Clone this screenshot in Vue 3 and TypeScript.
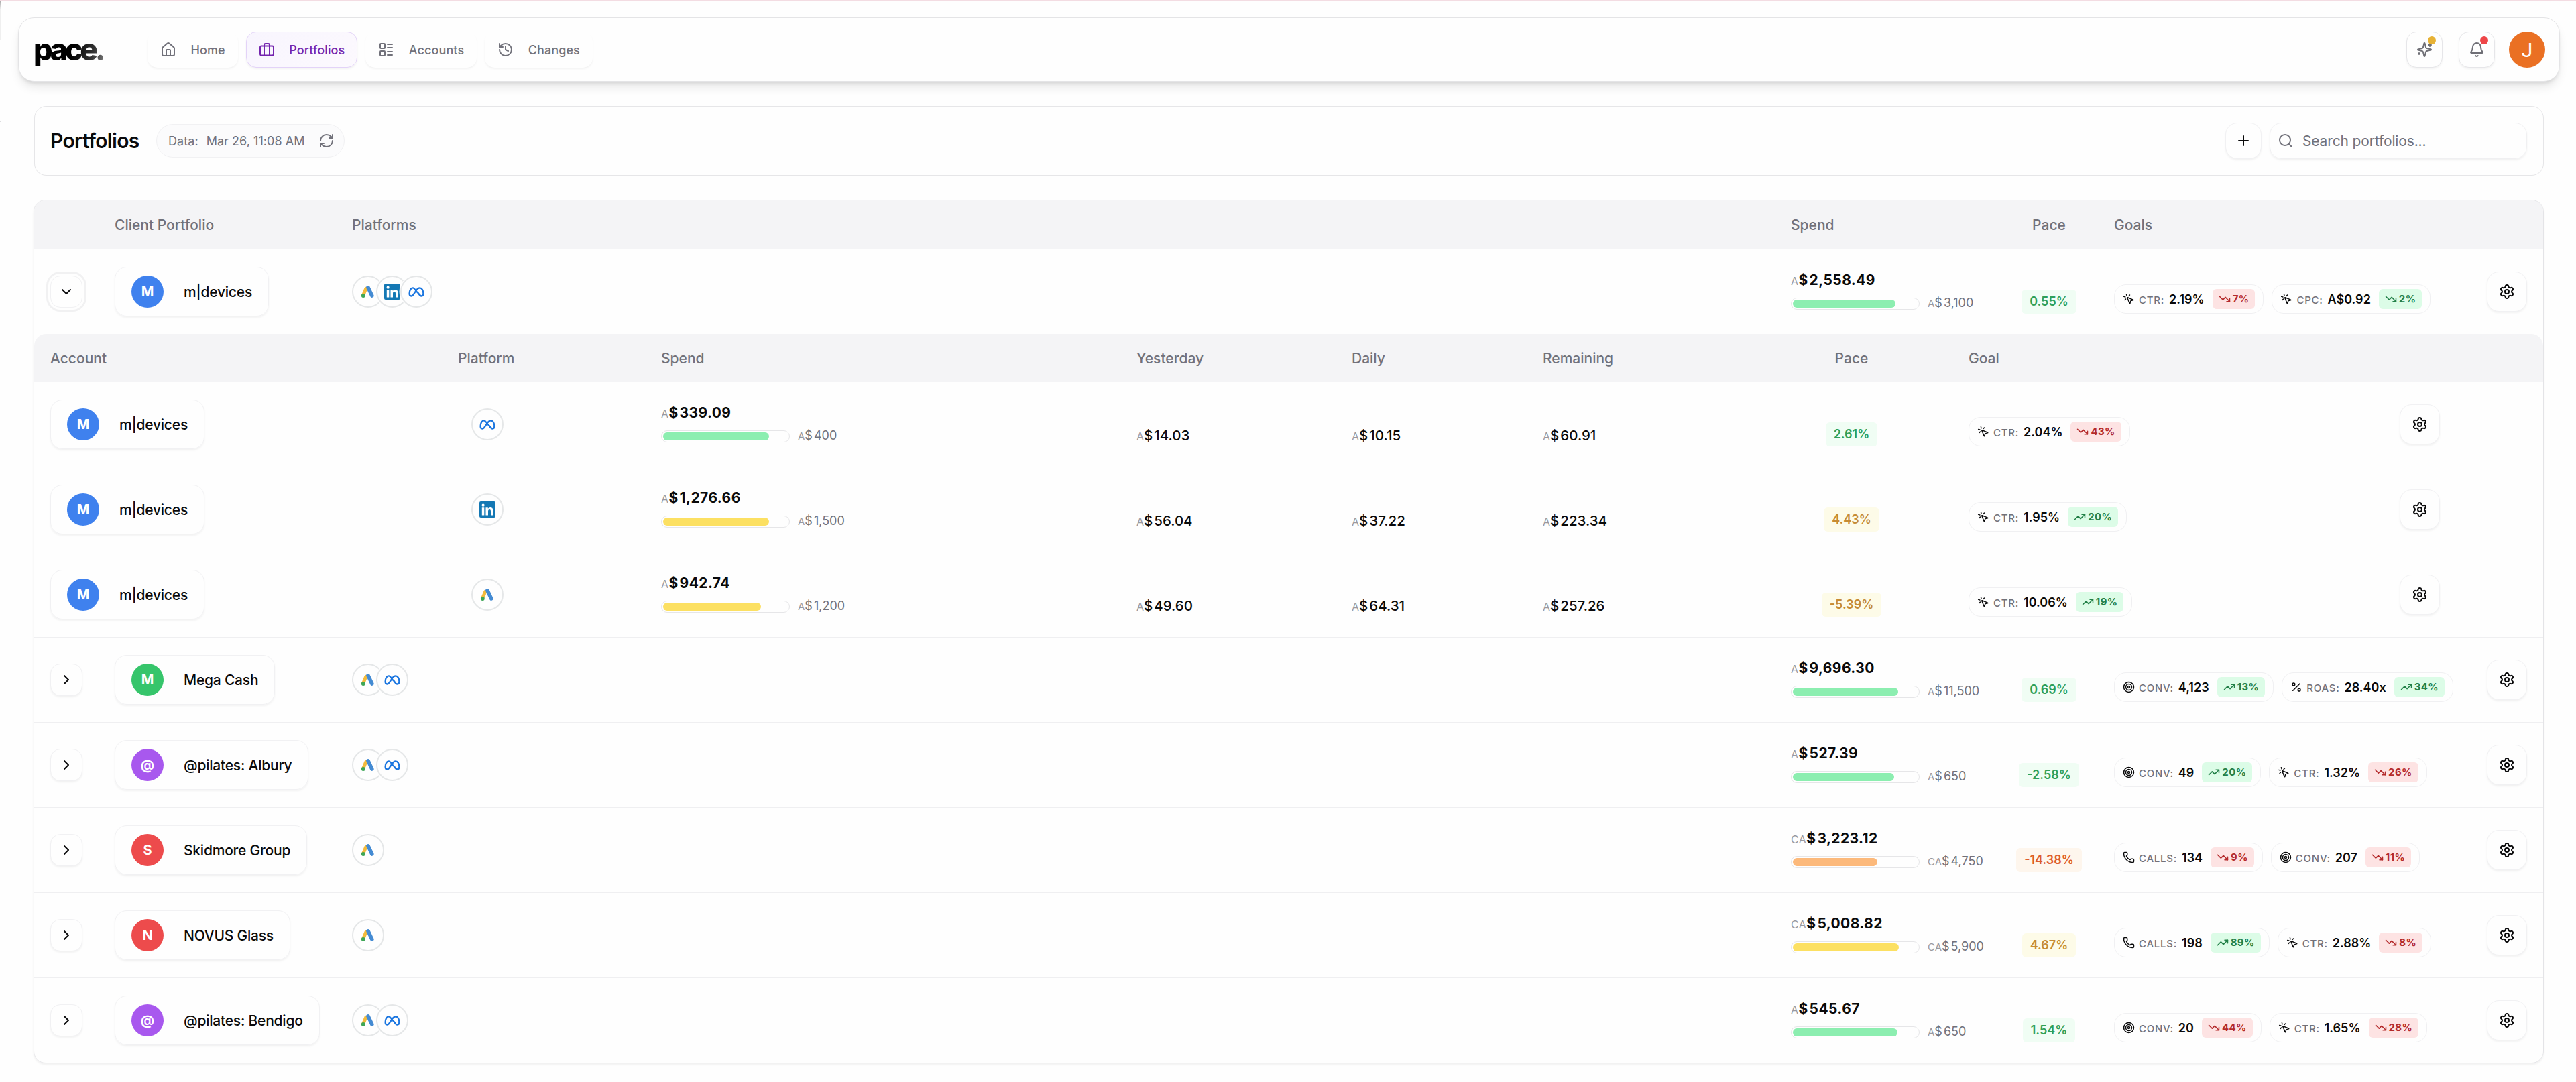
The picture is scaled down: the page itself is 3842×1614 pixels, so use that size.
<script setup lang="ts">
import { h, type FunctionalComponent } from 'vue'

type Tone = 'green' | 'yellow' | 'orange'
type PlatformName = 'google' | 'linkedin' | 'meta'

interface Goal {
  icon: string
  label: string
  value: string
  trend: 'up' | 'down'
  good: boolean
  change: string
}

interface Metrics {
  name: string
  cur: string
  spend: string
  budget: string
  fill: number
  tone: Tone
  pace: string
  paceTone: Tone
  goals: Goal[]
}

interface Account extends Metrics {
  platform: PlatformName
  yesterday: string
  daily: string
  remaining: string
}

interface Portfolio extends Metrics {
  letter: string
  color: string
  platforms: PlatformName[]
  accounts?: Account[]
}

const icons: Record<string, string> = {
  home: '<path d="M15 21v-8a1 1 0 0 0-1-1h-4a1 1 0 0 0-1 1v8"/><path d="M3 10a2 2 0 0 1 .709-1.528l7-5.999a2 2 0 0 1 2.582 0l7 5.999A2 2 0 0 1 21 10v9a2 2 0 0 1-2 2H5a2 2 0 0 1-2-2z"/>',
  briefcase: '<path d="M8 21V5a2 2 0 0 1 2-2h4a2 2 0 0 1 2 2v16"/><rect x="2" y="6.5" width="20" height="14" rx="2"/>',
  list: '<rect width="7" height="7" x="3" y="3" rx="1"/><rect width="7" height="7" x="3" y="14" rx="1"/><path d="M14 4h7"/><path d="M14 9h7"/><path d="M14 15h7"/><path d="M14 20h7"/>',
  history: '<path d="M3 12a9 9 0 1 0 9-9 9.750 9.750 0 0 0-6.740 2.740L3 8"/><path d="M3 3v5h5"/><path d="M12 7v5l4 2"/>',
  sparkles: '<path d="M9.937 15.500A2 2 0 0 0 8.500 14.063l-6.135-1.582a.5.5 0 0 1 0-.962L8.500 9.936A2 2 0 0 0 9.937 8.500l1.582-6.135a.5.5 0 0 1 .963 0L14.063 8.500A2 2 0 0 0 15.500 9.937l6.135 1.581a.5.5 0 0 1 0 .964L15.500 14.063a2 2 0 0 0-1.437 1.437l-1.582 6.135a.5.5 0 0 1-.963 0z"/><path d="M20 3v4"/><path d="M22 5h-4"/><path d="M4 17v2"/><path d="M5 18H3"/>',
  bell: '<path d="M10.268 21a2 2 0 0 0 3.464 0"/><path d="M3.262 15.326A1 1 0 0 0 4 17h16a1 1 0 0 0 .740-1.673C19.410 13.956 18 12.499 18 8A6 6 0 0 0 6 8c0 4.499-1.411 5.956-2.738 7.326"/>',
  refresh: '<path d="M3 12a9 9 0 0 1 9-9 9.750 9.750 0 0 1 6.740 2.740L21 8"/><path d="M21 3v5h-5"/><path d="M21 12a9 9 0 0 1-9 9 9.750 9.750 0 0 1-6.740-2.740L3 16"/><path d="M8 16H3v5"/>',
  plus: '<path d="M5 12h14"/><path d="M12 5v14"/>',
  search: '<circle cx="11" cy="11" r="8"/><path d="m21 21-4.300-4.300"/>',
  down: '<path d="m6 9 6 6 6-6"/>',
  right: '<path d="m9 18 6-6-6-6"/>',
  gear: '<path d="M9.671 4.136a2.340 2.340 0 0 1 4.659 0 2.340 2.340 0 0 0 3.319 1.915 2.340 2.340 0 0 1 2.330 4.033 2.340 2.340 0 0 0 0 3.831 2.340 2.340 0 0 1-2.330 4.033 2.340 2.340 0 0 0-3.319 1.915 2.340 2.340 0 0 1-4.659 0 2.340 2.340 0 0 0-3.320-1.915 2.340 2.340 0 0 1-2.330-4.033 2.340 2.340 0 0 0 0-3.831A2.340 2.340 0 0 1 6.350 6.051a2.340 2.340 0 0 0 3.319-1.915"/><circle cx="12" cy="12" r="3"/>',
  click: '<path d="M14 4.100 12 6"/><path d="m5.100 8-2.900-.8"/><path d="m6 12-1.900 2"/><path d="M7.200 2.200 8 5.100"/><path d="M9.037 9.690a.498.498 0 0 1 .653-.653l11 4.500a.5.5 0 0 1-.074.949l-4.349 1.041a1 1 0 0 0-.740.739l-1.040 4.350a.5.5 0 0 1-.950.074z"/>',
  target: '<circle cx="12" cy="12" r="10"/><circle cx="12" cy="12" r="6"/><circle cx="12" cy="12" r="2"/>',
  phone: '<path d="M13.832 16.568a1 1 0 0 0 1.213-.303l.355-.465A2 2 0 0 1 17 15h3a2 2 0 0 1 2 2v3a2 2 0 0 1-2 2A18 18 0 0 1 2 4a2 2 0 0 1 2-2h3a2 2 0 0 1 2 2v3a2 2 0 0 1-.8 1.600l-.468.351a1 1 0 0 0-.292 1.233 14 14 0 0 0 6.392 6.384"/>',
  percent: '<path d="M19 5 5 19"/><circle cx="6.500" cy="6.500" r="2.500"/><circle cx="17.500" cy="17.500" r="2.500"/>',
  up: '<path d="M16 7h6v6"/><path d="m22 7-8.500 8.500-5-5L2 17"/>',
  fall: '<path d="M16 17h6v-6"/><path d="m22 17-8.500-8.500-5 5L2 7"/>',
}

const Icon: FunctionalComponent<{ name: string; size?: number }> = (props) =>
  h('svg', {
    width: props.size ?? 24,
    height: props.size ?? 24,
    viewBox: '0 0 24 24',
    fill: 'none',
    stroke: 'currentColor',
    'stroke-width': 2,
    'stroke-linecap': 'round',
    'stroke-linejoin': 'round',
    style: 'display:block;flex:none',
    innerHTML: icons[props.name],
  })
Icon.props = ['name', 'size']

const logos: Record<PlatformName, string> = {
  google:
    '<path d="M8.900 7.300 4.700 17.200" stroke="#f3bb3c" stroke-width="5" stroke-linecap="round"/><path d="M12 5.800 17.800 18" stroke="#448bd3" stroke-width="5.600" stroke-linecap="round"/><circle cx="4.800" cy="18" r="2.900" fill="#3fa657"/>',
  linkedin:
    '<rect width="24" height="24" rx="2" fill="#1478b4"/><circle cx="5.600" cy="5.700" r="2.100" fill="#fff"/><path d="M3.800 9.200h3.500V20.500H3.800zM9.500 9.200h3.300v1.600c.6-1 1.800-1.900 3.500-1.900 3.400 0 4.200 2.200 4.200 5.300v6.300H17v-5.600c0-1.500-.2-2.900-1.900-2.900s-2.100 1.400-2.100 2.900v5.600H9.500z" fill="#fff"/>',
  meta:
    '<path d="M12 11.500C10.300 8.800 8.900 6.300 6.700 6.300 3.800 6.300 1.600 10.300 1.600 14.800c0 2.200 1 3.700 2.800 3.700 1.900 0 2.900-1.300 4.500-4.100L12 9.900c1.600-2.400 3.100-3.600 5.100-3.600 3.100 0 5.300 4 5.300 8.500 0 2.200-1 3.700-2.800 3.700-1.900 0-3-1.300-4.600-4.100z" fill="none" stroke="#1b76e0" stroke-width="2.300" stroke-linejoin="round"/>',
}

const Platform: FunctionalComponent<{ name: PlatformName }> = (props) =>
  h('svg', {
    width: 24,
    height: 24,
    viewBox: '0 0 24 24',
    style: 'display:block;flex:none',
    innerHTML: logos[props.name],
  })
Platform.props = ['name']

const nav = [
  { icon: 'home', label: 'Home', active: false },
  { icon: 'briefcase', label: 'Portfolios', active: true },
  { icon: 'list', label: 'Accounts', active: false },
  { icon: 'history', label: 'Changes', active: false },
]

const goal = (
  icon: string,
  label: string,
  value: string,
  trend: 'up' | 'down',
  good: boolean,
  change: string,
): Goal => ({ icon, label, value, trend, good, change })

const portfolios: Portfolio[] = [
  {
    name: 'm|devices', letter: 'M', color: '#3f81ee', platforms: ['google', 'linkedin', 'meta'],
    cur: 'A', spend: '2,558.49', budget: '3,100', fill: 82.5, tone: 'green', pace: '0.55%', paceTone: 'green',
    goals: [goal('click', 'CTR', '2.19%', 'down', false, '7%'), goal('click', 'CPC', 'A$0.92', 'down', true, '2%')],
    accounts: [
      {
        name: 'm|devices', platform: 'meta', cur: 'A', spend: '339.09', budget: '400', fill: 84.8, tone: 'green',
        yesterday: '14.03', daily: '10.15', remaining: '60.91', pace: '2.61%', paceTone: 'green',
        goals: [goal('click', 'CTR', '2.04%', 'down', false, '43%')],
      },
      {
        name: 'm|devices', platform: 'linkedin', cur: 'A', spend: '1,276.66', budget: '1,500', fill: 85.1, tone: 'yellow',
        yesterday: '56.04', daily: '37.22', remaining: '223.34', pace: '4.43%', paceTone: 'yellow',
        goals: [goal('click', 'CTR', '1.95%', 'up', true, '20%')],
      },
      {
        name: 'm|devices', platform: 'google', cur: 'A', spend: '942.74', budget: '1,200', fill: 78.6, tone: 'yellow',
        yesterday: '49.60', daily: '64.31', remaining: '257.26', pace: '-5.39%', paceTone: 'yellow',
        goals: [goal('click', 'CTR', '10.06%', 'up', true, '19%')],
      },
    ],
  },
  {
    name: 'Mega Cash', letter: 'M', color: '#36c56b', platforms: ['google', 'meta'],
    cur: 'A', spend: '9,696.30', budget: '11,500', fill: 84.3, tone: 'green', pace: '0.69%', paceTone: 'green',
    goals: [goal('target', 'CONV', '4,123', 'up', true, '13%'), goal('percent', 'ROAS', '28.40x', 'up', true, '34%')],
  },
  {
    name: '@pilates: Albury', letter: '@', color: '#a858ee', platforms: ['google', 'meta'],
    cur: 'A', spend: '527.39', budget: '650', fill: 81.1, tone: 'green', pace: '-2.58%', paceTone: 'green',
    goals: [goal('target', 'CONV', '49', 'up', true, '20%'), goal('click', 'CTR', '1.32%', 'down', false, '26%')],
  },
  {
    name: 'Skidmore Group', letter: 'S', color: '#ed4b4c', platforms: ['google'],
    cur: 'CA', spend: '3,223.12', budget: '4,750', fill: 67.9, tone: 'orange', pace: '-14.38%', paceTone: 'orange',
    goals: [goal('phone', 'CALLS', '134', 'down', false, '9%'), goal('target', 'CONV', '207', 'down', false, '11%')],
  },
  {
    name: 'NOVUS Glass', letter: 'N', color: '#ed4b4c', platforms: ['google'],
    cur: 'CA', spend: '5,008.82', budget: '5,900', fill: 84.9, tone: 'yellow', pace: '4.67%', paceTone: 'yellow',
    goals: [goal('phone', 'CALLS', '198', 'up', true, '89%'), goal('click', 'CTR', '2.88%', 'down', false, '8%')],
  },
  {
    name: '@pilates: Bendigo', letter: '@', color: '#a858ee', platforms: ['google', 'meta'],
    cur: 'A', spend: '545.67', budget: '650', fill: 83.9, tone: 'green', pace: '1.54%', paceTone: 'green',
    goals: [goal('target', 'CONV', '20', 'down', false, '44%'), goal('click', 'CTR', '1.65%', 'down', false, '28%')],
  },
]
</script>

<template>
  <div class="page">
    <i class="edge"></i>
    <i class="tick"></i>

    <header class="navbar">
      <div class="logo">pace.</div>
      <nav>
        <a v-for="n in nav" :key="n.label" :class="['nav-item', { active: n.active }]">
          <Icon :name="n.icon" /><span>{{ n.label }}</span>
        </a>
      </nav>
      <div class="actions">
        <button class="square"><Icon name="sparkles" /><i class="dot gold"></i></button>
        <button class="square"><Icon name="bell" /><i class="dot red"></i></button>
        <div class="user">J</div>
      </div>
    </header>

    <section class="toolbar">
      <h1>Portfolios</h1>
      <div class="data-pill"><span>Data:</span><span>Mar 26, 11:08 AM</span><Icon name="refresh" /></div>
      <button class="add"><Icon name="plus" /></button>
      <label class="search"><Icon name="search" /><span>Search portfolios...</span></label>
    </section>

    <main class="table">
      <div class="head main-cols">
        <span></span><span>Client Portfolio</span><span>Platforms</span><span>Spend</span>
        <span class="mid">Pace</span><span>Goals</span><span></span>
      </div>

      <template v-for="p in portfolios" :key="p.name">
        <div :class="['row main-cols', { open: p.accounts }]">
          <div class="cell"><button class="toggle"><Icon :name="p.accounts ? 'down' : 'right'" /></button></div>
          <div class="cell">
            <div class="client"><b :style="{ background: p.color }">{{ p.letter }}</b><span>{{ p.name }}</span></div>
          </div>
          <div class="cell">
            <span v-for="f in p.platforms" :key="f" class="platform"><Platform :name="f" /></span>
          </div>
          <div class="cell spend">
            <div class="amount"><small>{{ p.cur }}</small><em>$</em>{{ p.spend }}</div>
            <div class="progress">
              <div class="track"><div :class="['fill', p.tone]" :style="{ width: p.fill + '%' }"></div></div>
              <div class="budget"><small>{{ p.cur }}</small><em>$</em>{{ p.budget }}</div>
            </div>
          </div>
          <div class="cell pace"><span :class="['pace-badge', p.paceTone]">{{ p.pace }}</span></div>
          <div class="cell goals">
            <div v-for="g in p.goals" :key="g.label" class="goal">
              <Icon :name="g.icon" :size="18" />
              <span class="goal-label">{{ g.label }}:</span><span class="goal-value">{{ g.value }}</span>
              <span :class="['change', g.good ? 'good' : 'bad']">
                <Icon :name="g.trend === 'up' ? 'up' : 'fall'" :size="18" />{{ g.change }}
              </span>
            </div>
          </div>
          <div class="cell end"><button class="settings"><Icon name="gear" /></button></div>
        </div>

        <template v-if="p.accounts">
          <div class="head sub sub-cols">
            <span>Account</span><span>Platform</span><span>Spend</span><span>Yesterday</span>
            <span>Daily</span><span>Remaining</span><span class="mid">Pace</span><span>Goal</span><span></span>
          </div>
          <div v-for="a in p.accounts" :key="a.platform" class="row sub-cols">
            <div class="cell">
              <div class="client"><b :style="{ background: p.color }">{{ p.letter }}</b><span>{{ a.name }}</span></div>
            </div>
            <div class="cell account-platform"><span class="platform"><Platform :name="a.platform" /></span></div>
            <div class="cell spend">
              <div class="amount"><small>{{ a.cur }}</small><em>$</em>{{ a.spend }}</div>
              <div class="progress">
                <div class="track"><div :class="['fill', a.tone]" :style="{ width: a.fill + '%' }"></div></div>
                <div class="budget"><small>{{ a.cur }}</small><em>$</em>{{ a.budget }}</div>
              </div>
            </div>
            <div class="cell money"><small>{{ a.cur }}</small><em>$</em>{{ a.yesterday }}</div>
            <div class="cell money"><small>{{ a.cur }}</small><em>$</em>{{ a.daily }}</div>
            <div class="cell money"><small>{{ a.cur }}</small><em>$</em>{{ a.remaining }}</div>
            <div class="cell pace"><span :class="['pace-badge', a.paceTone]">{{ a.pace }}</span></div>
            <div class="cell goals">
              <div v-for="g in a.goals" :key="g.label" class="goal">
                <Icon :name="g.icon" :size="18" />
                <span class="goal-label">{{ g.label }}:</span><span class="goal-value">{{ g.value }}</span>
                <span :class="['change', g.good ? 'good' : 'bad']">
                  <Icon :name="g.trend === 'up' ? 'up' : 'fall'" :size="18" />{{ g.change }}
                </span>
              </div>
            </div>
            <div class="cell"><button class="settings"><Icon name="gear" /></button></div>
          </div>
        </template>
      </template>
    </main>
  </div>
</template>

<style>
body {
  background: #fefefe;
}
</style>

<style scoped>
* {
  box-sizing: border-box;
}

.page {
  position: relative;
  width: 3842px;
  height: 1614px;
  padding: 24px 24px 0 27px;
  border-top: 2px solid #f3dce2;
  background: #fefefe;
  color: #0a0a0b;
  font-family: Inter, "Liberation Sans", sans-serif;
  font-size: 21px;
  overflow: hidden;
}

.edge,
.tick {
  position: absolute;
  left: 0;
  width: 2px;
}

.edge {
  top: 0;
  height: 58px;
  background: linear-gradient(#aaa, #efefef 12px);
}

.tick {
  top: 178px;
  height: 2px;
  background: #dcdcde;
}

button {
  display: flex;
  align-items: center;
  justify-content: center;
  padding: 0;
  font: inherit;
  color: inherit;
  background: #fefefe;
  border: 1px solid #f1f1f3;
  box-shadow: 0 2px 3px rgba(0, 0, 0, 0.05);
}

.navbar {
  display: flex;
  align-items: center;
  height: 96px;
  padding: 0 21px 0 22px;
  border: 1px solid #e4e4e6;
  border-radius: 24px;
  background: #fefefe;
  box-shadow: 0 10px 15px -3px rgba(0, 0, 0, 0.1), 0 4px 6px -3px rgba(0, 0, 0, 0.14);
}

.logo {
  width: 170px;
  font-size: 45px;
  font-weight: 800;
  line-height: 60px;
  letter-spacing: -4.4px;
  background: linear-gradient(110deg, #000 0, #000 65px, #333 95px, #999 125px);
  background-clip: text;
  color: transparent;
}

nav {
  display: flex;
  gap: 12px;
}

.nav-item {
  display: flex;
  align-items: center;
  gap: 21.5px;
  height: 54px;
  padding: 0 18px;
  border: 1px solid transparent;
  border-radius: 15px;
  color: #71717a;
  font-size: 18px;
  font-weight: 500;
  letter-spacing: 0.1px;
  box-shadow: 0 2px 3px rgba(0, 0, 0, 0.05);
}

.nav-item.active {
  color: #7425ae;
  border-color: #e3d3f8;
  background: linear-gradient(135deg, #f8f5fe, #fcf9fe);
}

.actions {
  display: flex;
  align-items: center;
  margin-left: auto;
}

.square {
  position: relative;
  width: 54px;
  height: 54px;
  margin-right: 24px;
  border-color: #e6e6e9;
  border-radius: 15px;
  color: #6f6f76;
}

.square + .square {
  margin-right: 21px;
}

.dot {
  position: absolute;
  top: 6px;
  right: 9px;
  width: 12px;
  height: 12px;
  border-radius: 50%;
}

.gold {
  background: #e7b235;
}

.red {
  background: #ee4648;
}

.user {
  display: flex;
  align-items: center;
  justify-content: center;
  width: 54px;
  height: 54px;
  border-radius: 50%;
  background: #ea7023;
  color: #fff;
  font: 400 30px Roboto, sans-serif;
}

.toolbar {
  display: flex;
  align-items: center;
  height: 104px;
  margin: 36px 24px 36px 24px;
  padding: 0 24px;
  border: 1px solid #e6e6e8;
  border-radius: 18px;
}

h1 {
  width: 157px;
  margin: 0;
  font-size: 30px;
  font-weight: 600;
  line-height: 36px;
  letter-spacing: -0.65px;
  text-indent: -1px;
  white-space: nowrap;
}

.data-pill {
  display: flex;
  align-items: center;
  gap: 12px;
  height: 50px;
  padding: 0 14px 0 17px;
  border: 1px solid #f1f1f3;
  border-radius: 25px;
  background: #fbfbfc;
  color: #71717a;
  font-size: 18px;
  letter-spacing: 0.05px;
}

.data-pill svg {
  margin-left: 9px !important;
}

.add {
  width: 54px;
  height: 54px;
  margin-left: auto;
  border-radius: 18px;
}

.search {
  display: flex;
  align-items: center;
  gap: 13px;
  width: 384px;
  height: 54px;
  margin-left: 12px;
  padding: 0 11px;
  border: 1px solid #f0f0f2;
  border-radius: 18px;
  color: #71717a;
  letter-spacing: -0.15px;
  box-shadow: 0 2px 3px rgba(0, 0, 0, 0.05);
}

.table {
  width: 3744px;
  height: 1288px;
  margin-left: 23px;
  border: 1px solid #e4e4e7;
  border-radius: 18px;
  box-shadow: 0 2px 3px rgba(0, 0, 0, 0.06);
  overflow: hidden;
}

.main-cols {
  display: grid;
  grid-template-columns: 96px 354px 2146px 336px 146px 532px 1fr;
}

.sub-cols {
  display: grid;
  grid-template-columns: 608px 303px 709px 321px 285px 334px 301px 643px 1fr;
}

.head {
  align-items: center;
  height: 73px;
  border-bottom: 1px solid #e4e4e7;
  background: #f4f4f6;
  color: #71717a;
  font-weight: 500;
}

.head span {
  padding-left: 24px;
  padding-top: 1px;
}

.head .mid {
  padding-left: 0;
  text-align: center;
}

.head.sub {
  height: 72px;
  border-bottom: 0;
  border-radius: 18px 18px 0 0;
}

.row {
  height: 127px;
  border-bottom: 1px solid #efeff1;
}

.row.open {
  height: 126px;
  border-bottom: 0;
}

.row:last-child {
  border-bottom: 0;
}

.cell {
  display: flex;
  align-items: center;
  height: 126px;
  padding-left: 24px;
}

.toggle {
  width: 48px;
  height: 48px;
  border-radius: 15px;
}

.open .toggle {
  box-shadow: 0 0 0 3px #fefefe, 0 0 0 6px #f1f1f2;
}

.client {
  display: flex;
  align-items: center;
  height: 74px;
  padding: 0 24px;
  border: 1px solid #f1f1f3;
  border-radius: 18px;
  font-weight: 500;
  letter-spacing: -0.22px;
  white-space: nowrap;
  box-shadow: 0 2px 3px rgba(0, 0, 0, 0.05);
}

.client b {
  display: flex;
  align-items: center;
  justify-content: center;
  width: 48px;
  height: 48px;
  margin-right: 30px;
  border-radius: 50%;
  color: #fff;
  font-size: 20px;
  font-weight: 700;
  letter-spacing: 0;
}

.platform {
  position: relative;
  display: flex;
  align-items: center;
  justify-content: center;
  width: 48px;
  height: 48px;
  border: 2px solid #e5e7e8;
  border-radius: 50%;
  background: #fefefe;
  box-shadow: 0 0 0 1.5px #fefefe;
}

.platform + .platform {
  margin-left: -12px;
}

.account-platform {
  padding-left: 44px;
}

.spend {
  flex-direction: column;
  align-items: flex-start;
  justify-content: flex-start;
  padding-top: 30px;
}

small,
em {
  font-style: normal;
}

small {
  color: #99999f;
  font-weight: 400;
}

.amount {
  height: 41px;
  line-height: 31px;
  font-weight: 700;
  letter-spacing: 0.4px;
}

.amount small,
.money small {
  font-size: 16px;
}

/* keeps the smaller currency prefix on the digits' baseline */
.money small {
  padding-top: 3px;
}

em {
  margin-right: 2px;
}

.progress {
  display: flex;
  align-items: center;
  gap: 12px;
}

.track {
  width: 192px;
  height: 18px;
  padding: 2px;
  border: 1px solid #e6e6e8;
  border-radius: 9px;
}

.fill {
  height: 12px;
  border-radius: 6px;
}

.fill.green {
  background: #8ceeb0;
}

.fill.yellow {
  background: #fce062;
}

.fill.orange {
  background: #fcb97b;
}

.budget {
  color: #71717a;
  font-size: 18px;
  line-height: 18px;
}

.budget small {
  font-size: 15px;
}

.money {
  padding-top: 33px;
  font-size: 20.5px;
  font-weight: 500;
}

.pace {
  justify-content: center;
  padding: 30px 0 0;
}

.pace-badge {
  height: 36px;
  padding: 0 12px;
  border-radius: 6px;
  font-size: 18px;
  font-weight: 600;
  line-height: 36px;
}

.pace-badge.green {
  color: #2f9f58;
  background: #f0fdf4;
}

.pace-badge.yellow {
  color: #c68b33;
  background: #fdfbe8;
}

.pace-badge.orange {
  color: #dd5c2c;
  background: #fef6ed;
}

.goals {
  gap: 12px;
  padding-top: 22px;
}

.goal {
  display: flex;
  align-items: center;
  height: 44px;
  padding: 0 12px 0 12px;
  border: 1px solid #f0f0f2;
  border-radius: 18px;
  white-space: nowrap;
}

.goal-label {
  margin: 2px 7px 0 6px;
  color: #71717a;
  font-size: 15px;
  font-weight: 500;
  letter-spacing: 0.75px;
}

.goal-value {
  margin-right: 12px;
  font-size: 18px;
  font-weight: 600;
}

.change {
  display: flex;
  align-items: center;
  gap: 3px;
  height: 30px;
  padding: 0 9px;
  border-radius: 6px;
  font-size: 15px;
  font-weight: 700;
  letter-spacing: 0.4px;
  line-height: 30px;
}

.good {
  color: #238048;
  background: #dcfce7;
}

.bad {
  color: #b42a2b;
  background: #fde3e3;
}

.settings {
  width: 60px;
  height: 60px;
  border-radius: 18px;
}

.end {
  padding-left: 48px;
}
</style>
